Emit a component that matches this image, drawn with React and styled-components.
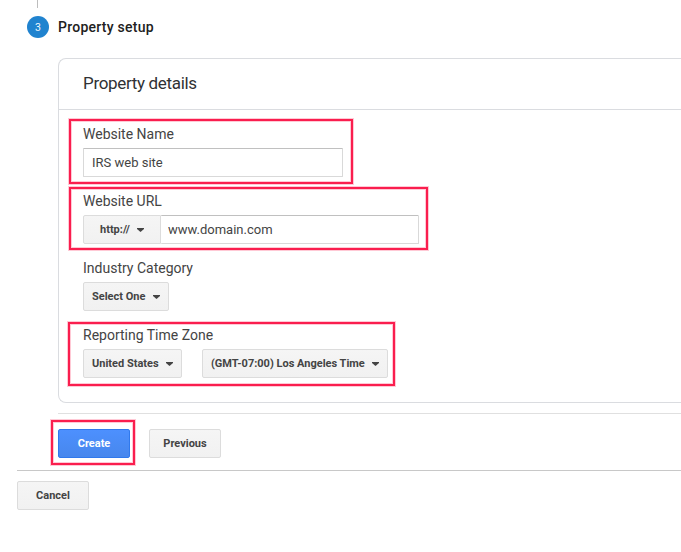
import React from "react";
import styled, { createGlobalStyle, css } from "styled-components";

const GlobalStyle = createGlobalStyle`
  * { box-sizing: border-box; }
  body {
    margin: 0;
    background: #fff;
    color: #444;
    font-family: Roboto, "Liberation Sans", sans-serif;
    overflow: hidden;
  }
`;

const Page = styled.main`
  height: 552px;
  overflow: hidden;
`;

const StepTrack = styled.div`
  width: 1px;
  height: 8px;
  margin-left: 37px;
  background: #bdbdbd;
`;

const StepHeader = styled.header`
  display: flex;
  align-items: center;
  gap: 9px;
  height: 22px;
  margin: 8px 0 0 27px;
`;

const StepBadge = styled.span`
  display: flex;
  align-items: center;
  justify-content: center;
  width: 22px;
  height: 22px;
  border-radius: 50%;
  background: #2083cf;
  color: #f0f7fc;
  font-size: 10.5px;
`;

const StepTitle = styled.h1`
  margin: 0;
  color: #212121;
  font-size: 14px;
  font-weight: 500;
  letter-spacing: 0.25px;
`;

const StepBody = styled.section`
  margin: 20px 0 0 58px;
`;

const Panel = styled.div`
  height: 345px;
  border: 1px solid #dadce0;
  border-right: 0;
  border-radius: 8px 0 0 8px;
`;

const PanelTitle = styled.h2`
  height: 51px;
  margin: 0;
  padding-left: 24px;
  border-bottom: 1px solid #dadce0;
  color: #303134;
  font-size: 17px;
  font-weight: 400;
  line-height: 48px;
  letter-spacing: -0.33px;
`;

const Fields = styled.div`
  display: flex;
  flex-direction: column;
  align-items: flex-start;
  gap: 14px;
  padding: 14px 0 0 24px;
`;

const Field = styled.div`
  position: relative;
`;

const Label = styled.div`
  margin-bottom: 4px;
  font-size: 14px;
  line-height: 20px;
`;

const Controls = styled.div`
  display: flex;
  gap: ${(p) => p.$gap || 0}px;
`;

const TextInput = styled.input`
  width: ${(p) => p.$width}px;
  height: 29px;
  margin: 0;
  padding: 0 8px;
  border: 1px solid #d9d9d9;
  border-top-color: #c0c0c0;
  border-left-width: ${(p) => (p.$joined ? 0 : 1)}px;
  border-radius: 1px;
  background: #fff;
  color: #444;
  font: 13px Roboto, sans-serif;
  outline: none;
  padding-left: ${(p) => (p.$joined ? 7 : 8)}px;
`;

const buttonFace = css`
  height: 29px;
  margin: 0;
  border: 1px solid #dcdcdc;
  border-radius: 2px;
  background: linear-gradient(#f5f5f5, #f1f1f1);
  color: #444;
  font: bold 11px Roboto, sans-serif;
  white-space: nowrap;
`;

const SelectButton = styled.button`
  ${buttonFace}
  display: flex;
  align-items: center;
  justify-content: space-between;
  width: ${(p) => p.$width}px;
  padding: 0 ${(p) => p.$right || 8}px 0 ${(p) => p.$left || 8}px;
  ${(p) => p.$joined && "border-radius: 2px 0 0 2px;"}
`;

const Caret = styled.svg`
  width: 7px;
  height: 4px;
  margin-top: 1px;
  fill: #444;
`;

const Button = styled.button`
  ${buttonFace}
  width: 72px;
  padding: 0;
  ${(p) =>
    p.$primary &&
    css`
      border-color: #3079ed;
      background: linear-gradient(#4d90fe, #4787ed);
      color: #fff;
    `}
`;

const ButtonSlot = styled.div`
  position: relative;
  display: flex;
`;

const Actions = styled.div`
  display: flex;
  gap: 19px;
  margin-top: 10px;
  padding-top: 15px;
  border-top: 1px solid #e0e0e0;
`;

const Footer = styled.footer`
  margin: 12px 0 0 17px;
  padding-top: 10px;
  border-top: 1px solid #c8c8c8;
`;

const Highlight = styled.span`
  position: absolute;
  inset: ${(p) => p.$inset};
  border: 2px solid #fa1e4e;
  box-shadow: 0 0 0 1px #ffc9d5, inset 0 0 0 1px #ffc9d5;
  pointer-events: none;
`;

function Select({ children, ...props }) {
  return (
    <SelectButton type="button" {...props}>
      {children}
      <Caret viewBox="0 0 7 4" aria-hidden="true">
        <path d="M0 0h7v1L3.5 4 0 1z" />
      </Caret>
    </SelectButton>
  );
}

export default function App() {
  return (
    <Page>
      <GlobalStyle />
      <StepTrack />
      <StepHeader>
        <StepBadge>3</StepBadge>
        <StepTitle>Property setup</StepTitle>
      </StepHeader>
      <StepBody>
        <Panel>
          <PanelTitle>Property details</PanelTitle>
          <Fields>
            <Field>
              <Label>Website Name</Label>
              <Controls>
                <TextInput $width={260} defaultValue="IRS web site" aria-label="Website Name" />
              </Controls>
              <Highlight $inset="-5px -10px -7px -14px" />
            </Field>
            <Field>
              <Label>Website URL</Label>
              <Controls>
                <Select $width={78} $left={16} $right={16} $joined>http://</Select>
                <TextInput $width={258} $joined defaultValue="www.domain.com" aria-label="Website URL" />
              </Controls>
              <Highlight $inset="-4px -9px -6px -14px" />
            </Field>
            <Field>
              <Label>Industry Category</Label>
              <Select $width={86}>Select One</Select>
            </Field>
            <Field>
              <Label>Reporting Time Zone</Label>
              <Controls $gap={20}>
                <Select $width={99}>United States</Select>
                <Select $width={186}>(GMT-07:00) Los Angeles Time</Select>
              </Controls>
              <Highlight $inset="-3px -7px -8px -15px" />
            </Field>
          </Fields>
        </Panel>
        <Actions>
          <ButtonSlot>
            <Button type="button" $primary>Create</Button>
            <Highlight $inset="-9px -5px -7px -7px" />
          </ButtonSlot>
          <Button type="button">Previous</Button>
        </Actions>
      </StepBody>
      <Footer>
        <Button type="button">Cancel</Button>
      </Footer>
    </Page>
  );
}
